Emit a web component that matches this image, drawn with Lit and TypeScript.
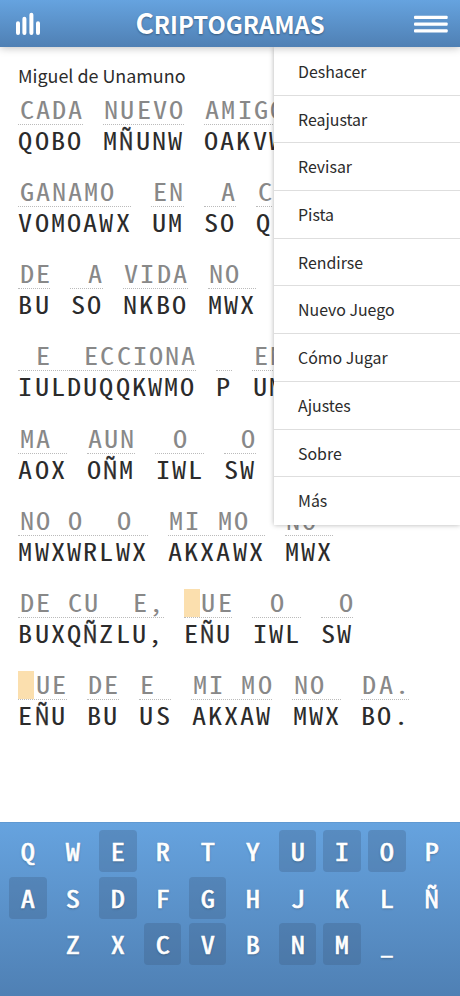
import { LitElement, html, css } from "lit";
import { customElement } from "lit/decorators.js";
import { classMap } from "lit/directives/class-map.js";

type Word = [answer: string, cipher: string];

const LINES: Word[][] = [
  [["CADA", "QOBO"], ["NUEVO", "MÑUNW"], ["AMIGO ", "OAKVWX"]],
  [["GANAMO ", "VOMOAWX"], ["EN", "UM"], [" A", "SO"], ["C", "Q"]],
  [["DE", "BU"], [" A", "SO"], ["VIDA", "NKBO"], ["NO ", "MWX"]],
  [[" E  ECCIONA", "IULDUQQKWMO"], [" ", "P"], ["EN", "UM"]],
  [["MA ", "AOX"], ["AUN", "OÑM"], [" O ", "IWL"], [" O", "SW"]],
  [["NO O  O ", "MWXWRLWX"], ["MI MO ", "AKXAWX"], ["NO ", "MWX"]],
  [["DE CU  E,", "BUXQÑZLU,"], [" UE", "EÑU"], [" O ", "IWL"], [" O", "SW"]],
  [[" UE", "EÑU"], ["DE", "BU"], ["E ", "US"], ["MI MO", "AKXAW"], ["NO ", "MWX"], ["DA.", "BO."]],
];
const SELECTED = "E";
const MENU = ["Deshacer", "Reajustar", "Revisar", "Pista", "Rendirse", "Nuevo Juego", "Cómo Jugar", "Ajustes", "Sobre", "Más"];
const KEYS = ["QWERTYUIOP", "ASDFGHJKLÑ", " ZXCVBNM_ "];
const USED = "EUIOADGCVNM";

// The mono face has no Ñ, so the wider proportional one is condensed to the cell.
const glyph = (c: string) => html`<span class=${classMap({ glyph: true, wide: c === "Ñ" })}>${c}</span>`;

const glyphStyles = css`
  .glyph { display: flex; justify-content: center; transform: scaleX(1.18); }
  .glyph.wide { transform: scaleX(0.85); -webkit-text-stroke: 0.5px currentColor; }
`;

@customElement("app-header")
class AppHeader extends LitElement {
  static styles = css`
    :host {
      display: grid;
      grid-template-columns: 60px 1fr 60px;
      align-items: center;
      height: 47px;
      box-sizing: border-box;
      color: #fff;
      background: linear-gradient(#66a3df, #4f80b4);
      box-shadow: 0 1px 8px rgba(0, 0, 0, 0.25);
      position: relative;
      z-index: 2;
    }
    .icon { display: block; }
    .stats { margin-left: 15px; }
    .menu { margin-left: 14px; }
    .title {
      margin: 0;
      text-align: center;
      font-size: 23.8px;
      line-height: 45px;
      height: 47px;
      font-weight: 700;
      white-space: nowrap;
      text-shadow: 0 1px 2px rgba(0, 0, 0, 0.35);
    }
    .initial { font-size: 28px; }
  `;
  render() {
    return html`
      <svg class="icon stats" width="28" height="27" viewBox="0 0 28 27" stroke="#fff" stroke-width="4" stroke-linecap="round">
        <path d="M3 13.2V23M9.4 8.8V23M16.4 4.8V23M23 13.2V23" />
      </svg>
      <h1 class="title"><span class="initial">C</span>RIPTOGRAMAS</h1>
      <svg class="icon menu" width="34" height="21" viewBox="0 0 34 21" fill="#fff">
        <rect x="0" y="2.8" width="33.7" height="3.2" rx="1" />
        <rect x="0" y="9.5" width="33.7" height="3.2" rx="1" />
        <rect x="0" y="16.3" width="33.7" height="3.2" rx="1" />
      </svg>
    `;
  }
}

@customElement("crypto-puzzle")
class CryptoPuzzle extends LitElement {
  static styles = [glyphStyles, css`
    :host { display: block; padding: 15px 18px 0; color: #2b2b2b; }
    .author { font-size: 17.9px; line-height: 26px; height: 34.1px; }
    .line { display: flex; gap: 20px; height: 82.14px; }
    .word { flex: none; }
    .row {
      display: flex;
      font-family: "Noto Sans Mono CJK SC", "Source Code Pro", "Noto Sans CJK SC", monospace;
      font-size: 24px;
      line-height: 26px;
      height: 28px;
    }
    .cell { width: 16.2px; height: 28px; white-space: pre; }
    .answer { color: #888; border-bottom: 1px dotted #bbb; }
    .answer .glyph { margin: 0 -0.5px 0 0.5px; }
    .cipher { margin-top: 2px; }
    .cipher .glyph { margin: 0 0.6px 0 -0.6px; }
    .selected { background: #fbdfae; }
  `];
  render() {
    return html`
      <div class="author">Miguel de Unamuno</div>
      ${LINES.map((line) => html`<div class="line">${line.map(([answer, cipher]) => html`
        <div class="word">
          <div class="row answer">${[...answer].map((c, i) => html`<span class=${classMap({ cell: true, selected: cipher[i] === SELECTED })}>${glyph(c)}</span>`)}</div>
          <div class="row cipher">${[...cipher].map((c) => html`<span class="cell">${glyph(c)}</span>`)}</div>
        </div>`)}</div>`)}
    `;
  }
}

@customElement("app-menu")
class AppMenu extends LitElement {
  static styles = css`
    :host {
      display: block;
      position: absolute;
      top: 47px;
      right: 0;
      width: 186px;
      padding-top: 0.9px;
      z-index: 1;
      background: #fff;
      color: #2b2b2b;
      box-shadow: 0 0 5px rgba(0, 0, 0, 0.3);
    }
    .item {
      height: 47.72px;
      box-sizing: border-box;
      padding-left: 24px;
      font-size: 15.9px;
      line-height: 48.4px;
      border-bottom: 1px solid #dedede;
    }
    .item:last-child { border-bottom: 0; }
  `;
  render() {
    return MENU.map((label) => html`<div class="item">${label}</div>`);
  }
}

@customElement("letter-keyboard")
class LetterKeyboard extends LitElement {
  static styles = [glyphStyles, css`
    :host {
      display: block;
      height: 174px;
      box-sizing: border-box;
      padding: 8px 9.3px 0;
      background: linear-gradient(#66a3df, #4f80b4);
      box-shadow: inset 0 1px 0 #5f99d2;
    }
    .keys {
      display: grid;
      grid-template-columns: repeat(10, 1fr);
      gap: 4.7px 7.4px;
    }
    .key {
      height: 42px;
      border-radius: 4px;
      color: #fff;
      white-space: pre;
      font-family: "Noto Sans Mono CJK SC", "Source Code Pro", "Noto Sans CJK SC", monospace;
      font-size: 24px;
      -webkit-text-stroke: 0.6px #fff;
      line-height: 42px;
      text-shadow: 0 1px 2px rgba(0, 0, 0, 0.3);
    }
    .key .glyph.wide { -webkit-text-stroke-width: 1.1px; }
    .used { background: rgba(60, 90, 125, 0.3); }
  `];
  render() {
    return html`<div class="keys">${KEYS.map((row) => [...row].map((c) => html`<span class=${classMap({ key: true, used: USED.includes(c) })}>${glyph(c)}</span>`))}</div>`;
  }
}

@customElement("app-root")
class AppRoot extends LitElement {
  static styles = css`
    :host {
      display: flex;
      flex-direction: column;
      position: relative;
      height: 996px;
      overflow: hidden;
      background: #fff;
      font-family: "Noto Sans CJK SC", "Noto Sans", sans-serif;
    }
    .board { flex: 1; min-height: 0; }
  `;
  render() {
    return html`
      <app-header></app-header>
      <crypto-puzzle class="board"></crypto-puzzle>
      <letter-keyboard></letter-keyboard>
      <app-menu></app-menu>
    `;
  }
}
